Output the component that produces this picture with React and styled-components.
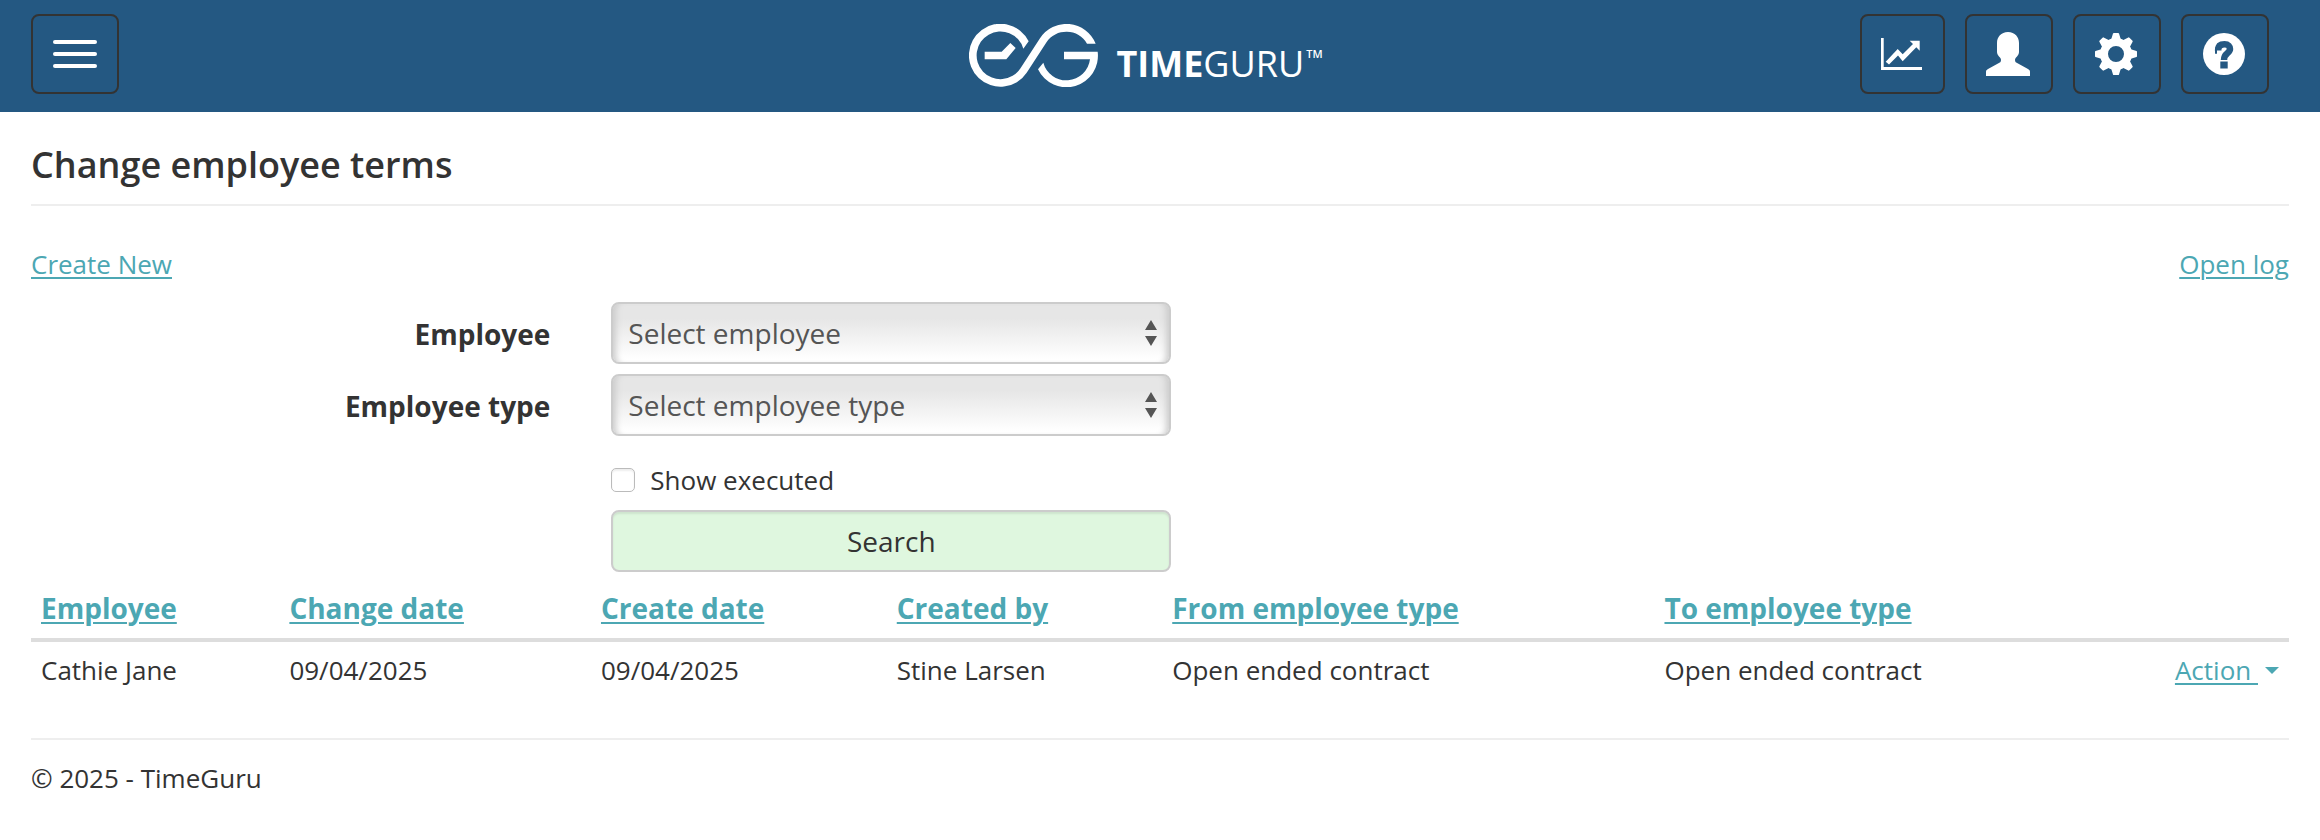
import { useState } from "react";
import styled, { createGlobalStyle } from "styled-components";

const terms = [
  {
    id: 1,
    employee: "Cathie Jane",
    changeDate: "09/04/2025",
    createDate: "09/04/2025",
    createdBy: "Stine Larsen",
    from: "Open ended contract",
    to: "Open ended contract",
  },
];

const columns = [
  { key: "employee", title: "Employee", width: "11%" },
  { key: "changeDate", title: "Change date", width: "13.8%" },
  { key: "createDate", title: "Create date", width: "13.1%" },
  { key: "createdBy", title: "Created by", width: "12.2%" },
  { key: "from", title: "From employee type", width: "21.8%" },
  { key: "to", title: "To employee type", width: "18%" },
];

const Logo = () => (
  <svg width="129" height="63" viewBox="57 72 387 189" fill="#fff" aria-hidden="true">
    <path d="M236 124A94.500 94.500 0 1 0 230 218L289 127.500A71.500 71.500 0 0 1 411 131H437A94.500 94.500 0 0 0 270 115L211 205.500A71.500 71.500 0 1 1 220 146Z" />
    <path d="M264 208A94.500 94.500 0 0 0 443 155H342V178H420A71.500 71.500 0 0 1 280 188Z" />
    <path d="M104 155H155L181 129L197 144L169 178H104Z" />
  </svg>
);

const ChartIcon = () => (
  <svg width="41" height="32" viewBox="0 0 41 32" fill="#fff" aria-hidden="true">
    <path d="M0 0H2.700V29H41V32H0Z" />
    <path d="M4.700 23.700L16.700 11L21.700 16.300L32 6L28.700 2.700H38.700V12.700L35.300 9.300L21.700 23.300L17 17.500L8 26.500Z" />
  </svg>
);

const UserIcon = () => (
  <svg width="44" height="44" viewBox="0 0 44 44" fill="#fff" aria-hidden="true">
    <path d="M22 0C15 0 11 5 11 11V20C11 24 15 25 15 28C15 30 14 30.500 12 31.500L2 37C0.500 38 0 38.500 0 40V44H44V40C44 38.500 43.500 38 42 37L32 31.500C30 30.500 29 30 29 28C29 25 33 24 33 20V11C33 5 29 0 22 0Z" />
  </svg>
);

const CogIcon = () => (
  <svg width="42" height="42" viewBox="-21 -21 42 42" fill="#fff" aria-hidden="true">
    <circle r="12" fill="none" stroke="#fff" strokeWidth="8" />
    {[0, 45, 90, 135, 180, 225, 270, 315].map((angle) => (
      <path key={angle} d="M-5 -14L-3 -20.500Q-3 -21 -2 -21H2Q3 -21 3 -20.500L5 -14Z" transform={`rotate(${angle})`} />
    ))}
  </svg>
);

const HelpIcon = () => (
  <svg width="42" height="42" viewBox="0 0 42 42" aria-hidden="true">
    <circle cx="21" cy="21" r="21" fill="#fff" />
    <path
      d="M12 17.500H18.500M15 17.500C15 13 17.500 11.300 21.500 11.300C25.500 11.300 27 13.500 27 16C27 20.500 21 19.500 21 27"
      fill="none"
      stroke="#245882"
      strokeWidth="6.500"
    />
    <path d="M14 17.500H19V21H14Z" fill="#fff" />
    <path d="M17.300 28.500H24.700V35.500H17.300Z" fill="#245882" />
  </svg>
);

const SelectField = ({ id, label, placeholder }) => (
  <FormRow>
    <Label htmlFor={id}>{label}</Label>
    <SelectWrap>
      <Select id={id} defaultValue="">
        <option value="">{placeholder}</option>
      </Select>
      <SelectArrows viewBox="0 0 12 26" aria-hidden="true">
        <path d="M6 0L12 10H0ZM6 26L0 16H12Z" fill="#555" />
      </SelectArrows>
    </SelectWrap>
  </FormRow>
);

export default function App() {
  const [showExecuted, setShowExecuted] = useState(false);

  return (
    <>
      <GlobalStyle />
      <Header>
        <NavGroup>
          <NavButton type="button" aria-label="Menu">
            <Burger>
              <BurgerBar />
              <BurgerBar />
              <BurgerBar />
            </Burger>
          </NavButton>
        </NavGroup>
        <Brand href="#">
          <Logo />
          <BrandName>
            <BrandStrong>TIME</BrandStrong>GURU
          </BrandName>
          <BrandMark>TM</BrandMark>
        </Brand>
        <NavGroup $end>
          <NavButton type="button" aria-label="Reports" $narrow>
            <ChartIcon />
          </NavButton>
          <NavButton type="button" aria-label="Profile">
            <UserIcon />
          </NavButton>
          <NavButton type="button" aria-label="Settings">
            <CogIcon />
          </NavButton>
          <NavButton type="button" aria-label="Help">
            <HelpIcon />
          </NavButton>
        </NavGroup>
      </Header>
      <Page>
        <Title>Change employee terms</Title>
        <Links>
          <Link href="#">Create New</Link>
          <Link href="#">Open log</Link>
        </Links>
        <Form onSubmit={(e) => e.preventDefault()}>
          <SelectField id="employee" label="Employee" placeholder="Select employee" />
          <SelectField id="employeeType" label="Employee type" placeholder="Select employee type" />
          <FormRow>
            <CheckLabel>
              <Checkbox
                type="checkbox"
                checked={showExecuted}
                onChange={(e) => setShowExecuted(e.target.checked)}
              />
              Show executed
            </CheckLabel>
          </FormRow>
          <FormRow>
            <SearchButton type="submit">Search</SearchButton>
          </FormRow>
        </Form>
        <Table>
          <thead>
            <tr>
              {columns.map((column) => (
                <HeadCell key={column.key} $width={column.width}>
                  <Link href="#">{column.title}</Link>
                </HeadCell>
              ))}
              <HeadCell />
            </tr>
          </thead>
          <tbody>
            {terms.map((term) => (
              <tr key={term.id}>
                {columns.map((column) => (
                  <Cell key={column.key}>{term[column.key]}</Cell>
                ))}
                <Cell $right>
                  <Link href="#">
                    Action&nbsp;
                    <Caret />
                  </Link>
                </Cell>
              </tr>
            ))}
          </tbody>
        </Table>
        <Footer>© 2025 - TimeGuru</Footer>
      </Page>
    </>
  );
}

const GlobalStyle = createGlobalStyle`
  * {
    box-sizing: border-box;
  }

  body {
    margin: 0;
    background: #fff;
    color: #333;
    font-family: "Open Sans", sans-serif;
    font-size: 26px;
    line-height: 36px;
  }
`;

const Header = styled.header`
  display: grid;
  grid-template-columns: 1fr auto 1fr;
  align-items: center;
  height: 112px;
  padding: 0 51px 4px 31px;
  background: #245882;
`;

const NavGroup = styled.div`
  display: flex;
  gap: 20px;
  justify-content: ${(props) => (props.$end ? "flex-end" : "flex-start")};
`;

const NavButton = styled.button`
  display: flex;
  align-items: center;
  justify-content: center;
  width: ${(props) => (props.$narrow ? "85px" : "88px")};
  height: 80px;
  padding: 0;
  border: 2px solid #333;
  border-radius: 8px;
  background: transparent;
  cursor: pointer;

  svg {
    margin-right: 2px;
  }
`;

const Burger = styled.span`
  display: flex;
  flex-direction: column;
  gap: 8px;
`;

const BurgerBar = styled.span`
  width: 44px;
  height: 4px;
  border-radius: 2px;
  background: #fff;
`;

const Brand = styled.a`
  display: flex;
  align-items: center;
  padding: 2px 8px 0 0;
  color: #fff;
  text-decoration: none;
`;

const BrandName = styled.span`
  margin: 18px 0 0 18px;
  font-size: 36px;
  line-height: 36px;
`;

const BrandStrong = styled.span`
  font-weight: 700;
`;

const BrandMark = styled.span`
  align-self: flex-start;
  margin: 24px 0 0 2px;
  font-size: 11px;
  line-height: 12px;
  font-weight: 600;
`;

const Page = styled.main`
  padding: 0 31px;
`;

const Title = styled.h1`
  margin: 0;
  padding: 30px 0 16px;
  border-bottom: 2px solid #eee;
  font-size: 36px;
  line-height: 46px;
  font-weight: 600;
`;

const Links = styled.div`
  display: flex;
  justify-content: space-between;
  margin-top: 40px;
`;

const Link = styled.a`
  color: #4ca7b3;
  text-decoration: underline;
  text-decoration-thickness: 2px;
  text-underline-offset: 3px;
`;

const Form = styled.form`
  display: grid;
  gap: 10px;
  margin-top: 20px;
`;

const FormRow = styled.div`
  display: grid;
  grid-template-columns: 23% 560px;
  column-gap: 61px;
  align-items: center;
`;

const Label = styled.label`
  padding-top: 2px;
  font-size: 28px;
  font-weight: 700;
  text-align: right;
`;

const SelectWrap = styled.div`
  position: relative;
`;

const Select = styled.select`
  display: block;
  width: 100%;
  height: 62px;
  padding: 0 40px 0 15px;
  border: 2px solid #ccc;
  border-radius: 8px;
  appearance: none;
  background: linear-gradient(#e6e6e6 25%, #fff 95%);
  box-shadow: inset 8px 0 6px -5px #ccc, inset -8px 0 6px -5px #ccc;
  color: #555;
  font-family: inherit;
  font-size: 28px;
`;

const SelectArrows = styled.svg`
  position: absolute;
  top: 18px;
  right: 14px;
  width: 12px;
  height: 26px;
  pointer-events: none;
`;

const CheckLabel = styled.label`
  grid-column: 2;
  display: flex;
  align-items: center;
  gap: 15px;
  padding: 16px 0 2px;
`;

const Checkbox = styled.input`
  width: 24px;
  height: 24px;
  margin: 0;
  border: 1px solid #bbb;
  border-radius: 5px;
  appearance: none;
  background: #fff;
  box-shadow: inset 0 2px 2px #eee;

  &:checked {
    background: #4ca7b3;
  }
`;

const SearchButton = styled.button`
  grid-column: 2;
  height: 62px;
  border: 2px solid #ccc;
  border-radius: 8px;
  background: #dff7df;
  box-shadow: inset 0 2px 2px rgba(0, 0, 0, 0.08);
  color: #333;
  font-family: inherit;
  font-size: 28px;
  cursor: pointer;
`;

const Table = styled.table`
  width: 100%;
  margin-top: 10px;
  border-collapse: collapse;
  table-layout: fixed;
`;

const HeadCell = styled.th`
  width: ${(props) => props.$width || "auto"};
  padding: 8px 10px 12px;
  border-bottom: 4px solid #ddd;
  font-size: 28px;
  font-weight: 700;
  text-align: left;
`;

const Cell = styled.td`
  padding: 10px;
  text-align: ${(props) => (props.$right ? "right" : "left")};
`;

const Caret = styled.span`
  display: inline-block;
  margin-left: 7px;
  border-top: 7px solid;
  border-right: 7px solid transparent;
  border-left: 7px solid transparent;
  vertical-align: 6px;
`;

const Footer = styled.footer`
  margin-top: 40px;
  padding: 20px 0;
  border-top: 2px solid #eee;
`;
